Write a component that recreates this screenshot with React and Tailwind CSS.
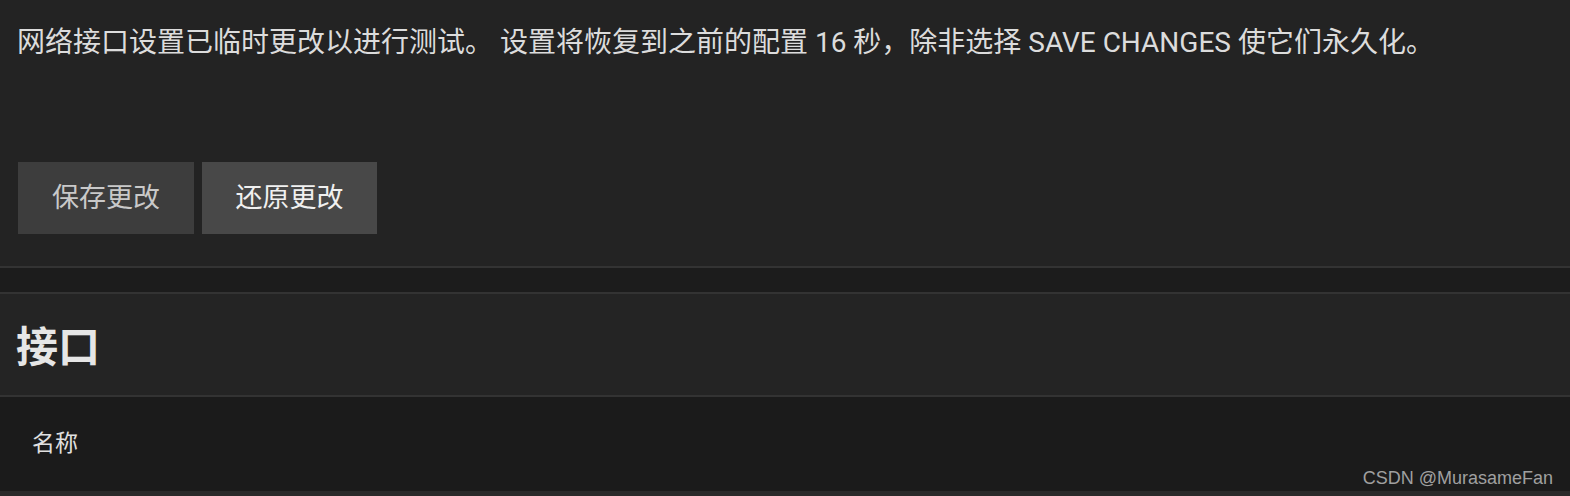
export default function App() {
  const cjk = { fontFamily: 'Roboto, "Noto Sans CJK SC", sans-serif' };
  return (
    <div className="relative w-[1570px] h-[496px] overflow-hidden bg-[#1b1b1b]" style={cjk}>
      <section className="bg-[#232323] h-[268px] pl-[17px] pt-[23px] border-b-2 border-[#333333]">
        <p className="text-[28px] leading-[40px] text-[#dcdcdc] whitespace-nowrap">
          网络接口设置已临时更改以进行测试。 设置将恢复到之前的配置 16 秒，除非选择 SAVE CHANGES 使它们永久化。
        </p>
        <div className="flex gap-[8px] mt-[99px] pl-px">
          <button className="w-[176px] h-[72px] bg-[#3d3d3d] text-[#c9c9c9] text-[27px]">保存更改</button>
          <button className="w-[175px] h-[72px] bg-[#484848] text-[#f0f0f0] text-[27px]">还原更改</button>
        </div>
      </section>
      <div className="h-[24px] bg-[#1c1c1c]" />
      <section className="bg-[#242424] border-t-2 border-b-2 border-[#333333] h-[105px] flex items-center pl-[16px] pt-[7px]">
        <h2 className="text-[42px] font-bold text-[#e6e6e6] leading-none">接口</h2>
      </section>
      <div className="h-[99px] bg-[#1b1b1b] flex items-center pl-[32px] border-b-[5px] border-[#2a2a2a]">
        <span className="text-[23px] text-[#e0e0e0]">名称</span>
      </div>
      <div className="absolute right-[17px] bottom-[9px] text-[18px] leading-none text-[#a0a0a0]" style={{ fontFamily: '"Liberation Sans", Arial, sans-serif' }}>
        CSDN @MurasameFan
      </div>
    </div>
  );
}
